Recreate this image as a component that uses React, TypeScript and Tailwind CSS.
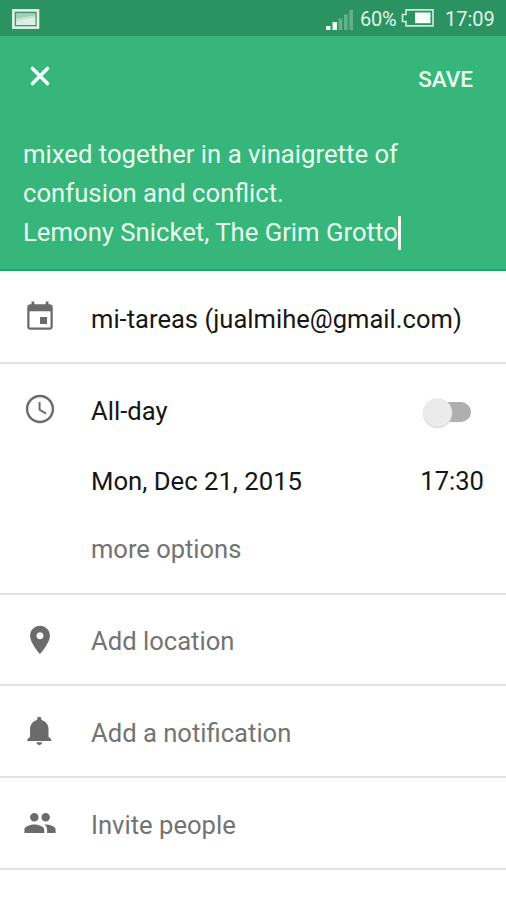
import type { ReactNode } from "react";

function Icon({ d, className = "" }: { d: string; className?: string }) {
  return (
    <svg viewBox="0 0 24 24" className={`block size-[34px] shrink-0 fill-[#6b6b6b] ${className}`}>
      <path d={d} />
    </svg>
  );
}

const icons = {
  event:
    "M17 12h-5v5h5v-5zM16 1v2H8V1H6v2H5c-1.11 0-1.99.9-1.99 2L3 19c0 1.1.89 2 2 2h14c1.1 0 2-.9 2-2V5c0-1.1-.9-2-2-2h-1V1h-2zm3.4 18.4H4.6V8h14.8v11.4z",
  clock:
    "M11.99 2C6.47 2 2 6.48 2 12s4.47 10 9.99 10C17.52 22 22 17.52 22 12S17.52 2 11.99 2zM12 20.3c-4.58 0-8.3-3.72-8.3-8.3s3.72-8.3 8.3-8.3 8.3 3.72 8.3 8.3-3.72 8.3-8.3 8.3zM12.4 7h-1.4v5.9l5 3 .7-1.2-4.3-2.6z",
  place:
    "M12 2C8.13 2 5 5.13 5 9c0 5.25 7 13 7 13s7-7.75 7-13c0-3.87-3.13-7-7-7zm0 9.5c-1.38 0-2.5-1.12-2.5-2.5s1.12-2.5 2.5-2.5 2.5 1.12 2.5 2.5-1.12 2.5-2.5 2.5z",
  bell:
    "M11.5 22c1.1 0 2-.9 2-2h-4c0 1.1.9 2 2 2zm6.5-6v-5.5c0-3.07-2.13-5.64-5-6.32V3.5c0-.83-.67-1.5-1.5-1.5S10 2.67 10 3.5v.68c-2.87.68-5 3.25-5 6.32V16l-2 2v1h17v-1l-2-2z",
  people:
    "M16 11c1.66 0 2.99-1.34 2.99-3S17.66 5 16 5c-1.66 0-3 1.34-3 3s1.34 3 3 3zm-8 0c1.66 0 2.99-1.34 2.99-3S9.66 5 8 5C6.34 5 5 6.34 5 8s1.34 3 3 3zm0 2c-2.33 0-7 1.17-7 3.5V19h14v-2.5c0-2.33-4.67-3.5-7-3.5zm8 0c-.29 0-.62.02-.97.05 1.16.84 1.97 1.97 1.97 3.45V19h6v-2.5c0-2.33-4.67-3.5-7-3.5z",
};

function Row({ icon, iconClass, className, children }: { icon: string; iconClass?: string; className: string; children: ReactNode }) {
  return (
    <div className={`flex items-start border-b-2 border-[#e1e1e1] pl-[23px] ${className}`}>
      <Icon d={icon} className={iconClass} />
      <div className="ml-[34px] whitespace-nowrap">{children}</div>
    </div>
  );
}

function StatusBar() {
  return (
    <div className="flex h-9 items-center bg-[#2a9361] text-[20px] text-[#e0f5e8]">
      <svg width="28" height="22" viewBox="0 0 28 22" className="ml-3 mt-px">
        <rect x="1.2" y="2.2" width="25" height="17.6" fill="#a3cfb7" stroke="#e4f8ec" strokeWidth="2.2" />
        <rect x="3.5" y="4.5" width="20.4" height="13" fill="none" stroke="#4b9870" strokeWidth="1.2" />
        <path d="M4.2 9.5c4 2 8-1 19-2V17H4.2z" fill="#c4e4d2" />
        <path d="M4.2 13c6 0 10-3 19-3v7H4.2z" fill="#daf0e3" />
      </svg>
      <svg width="28" height="22" viewBox="0 0 28 22" className="ml-[286px] mt-[3px]">
        <path d="M0 17h4.5v4H0zM6.5 13H11v8H6.5z" fill="#e9fbf0" />
        <path d="M12.5 9.5h3.8V21h-3.8zM18 5.5h3.7V21H18zM23.3 1H27v20h-3.7z" fill="#63b18a" />
      </svg>
      <span className="ml-[6px] w-[37px] whitespace-nowrap pt-[2px] font-[450] tracking-[-0.3px]">60%</span>
      <svg width="34" height="20" viewBox="0 0 34 20" className="ml-1">
        <path d="M5 1.8h27v16H5v-4.3H1.5v-7H5z" fill="none" stroke="#c9ebd8" strokeWidth="1.7" />
        <path d="M14 4.5h15.5v10.7H14z" fill="#f7fffa" />
      </svg>
      <span className="ml-[10px] whitespace-nowrap pt-[2px]">17:09</span>
    </div>
  );
}

export default function App() {
  return (
    <div className="h-[900px] w-[506px] overflow-hidden bg-white font-['Roboto',sans-serif] text-[25.6px] leading-10 text-[#161616]">
      <StatusBar />
      <header className="flex h-[235px] flex-col border-b-2 border-[#16ab6d] bg-[#36b67b] text-[#e9fbef]">
        <div className="flex h-[79px] items-center justify-between pl-[30px] pr-[33px]">
          <svg width="20" height="20" viewBox="0 0 20 20" fill="none" stroke="#f4fff8" strokeWidth="3.6" strokeLinecap="round">
            <path d="M2.5 2.5l15 15M17.5 2.5l-15 15" />
          </svg>
          <span className="pt-[7px] text-[22.5px] font-medium leading-[30px]">SAVE</span>
        </div>
        <div className="whitespace-nowrap pl-[23px] pt-[20px] text-[25.7px] leading-[39.2px]">
          <div>mixed together in a vinaigrette of</div>
          <div>confusion and conflict.</div>
          <div className="flex items-center">
            Lemony Snicket, The Grim Grotto
            <span className="h-[34px] w-[3px] bg-[#f4fff8]" />
          </div>
        </div>
      </header>

      <Row icon={icons.event} iconClass="mt-[29px]" className="h-[93px]">
        <div className="mt-[28px] text-[25.5px] tracking-[0.03px]">mi-tareas (jualmihe@gmail.com)</div>
      </Row>
      <Row icon={icons.clock} iconClass="mt-[28px]" className="h-[231px]">
        <div className="mt-[27px] flex w-[393px] items-center justify-between">
          <span>All-day</span>
          <span className="mr-[13px] mt-[2px] flex h-[30px] w-[48px] items-center">
            <span className="z-10 size-[29px] shrink-0 rounded-full bg-[#ebebeb] shadow-[0_1px_1px_#cfcfcf]" />
            <span className="-ml-[14px] h-5 w-[34px] rounded-r-full bg-[#afafaf]" />
          </span>
        </div>
        <div className="mt-[30px] flex w-[393px] justify-between">
          <span className="text-[25.7px]">Mon, Dec 21, 2015</span>
          <span>17:30</span>
        </div>
        <div className="mt-[28px] text-[25.5px] text-[#737373]">more options</div>
      </Row>
      <Row icon={icons.place} iconClass="mt-[28px]" className="h-[91px] text-[#737373]">
        <div className="mt-[26px]">Add location</div>
      </Row>
      <Row icon={icons.bell} iconClass="mt-[28px]" className="h-[92px] text-[#737373]">
        <div className="mt-[27px]">Add a notification</div>
      </Row>
      <Row icon={icons.people} iconClass="mt-[28px]" className="h-[92px] text-[#737373]">
        <div className="mt-[27px]">Invite people</div>
      </Row>
    </div>
  );
}
